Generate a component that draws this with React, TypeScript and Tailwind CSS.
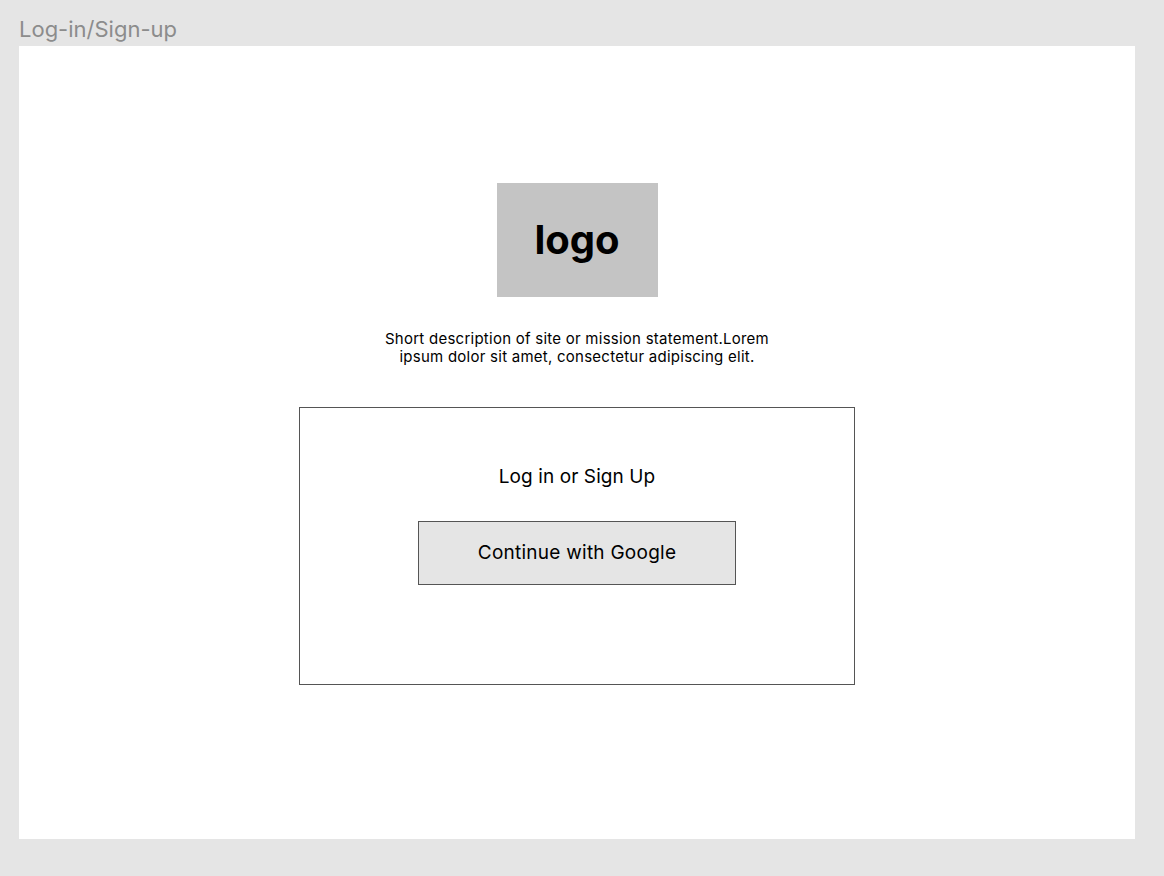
export default function App() {
  return (
    <div className="w-[1164px] h-[876px] bg-[#e5e5e5] font-['Inter','Liberation_Sans',sans-serif]">
      <div className="pl-[19px] pt-[14px] text-[22px] leading-[30px] text-[#8c8c8c]">Log-in/Sign-up</div>
      <div className="mt-[2px] ml-[19px] w-[1116px] h-[793px] bg-white flex flex-col items-center pt-[137px]">
        <div className="w-[161px] h-[114px] bg-[#c4c4c4] flex items-center justify-center text-[40px] font-bold text-black">
          logo
        </div>
        <p className="mt-[33px] text-[15px] leading-[18px] tracking-[0.25px] text-center text-black">
          Short description of site or mission statement.Lorem
          <br />
          ipsum dolor sit amet, consectetur adipiscing elit.
        </p>
        <div className="mt-[41px] w-[556px] h-[278px] border border-[#555555] flex flex-col items-center pt-[57px]">
          <div className="text-[19px] leading-[24px] tracking-[0.1px] text-black">Log in or Sign Up</div>
          <div className="mt-[32px] w-[318px] h-[64px] bg-[#e5e5e5] border border-[#555555] flex items-center justify-center text-[19px] tracking-[0.25px] text-black">
            Continue with Google
          </div>
        </div>
      </div>
    </div>
  );
}
